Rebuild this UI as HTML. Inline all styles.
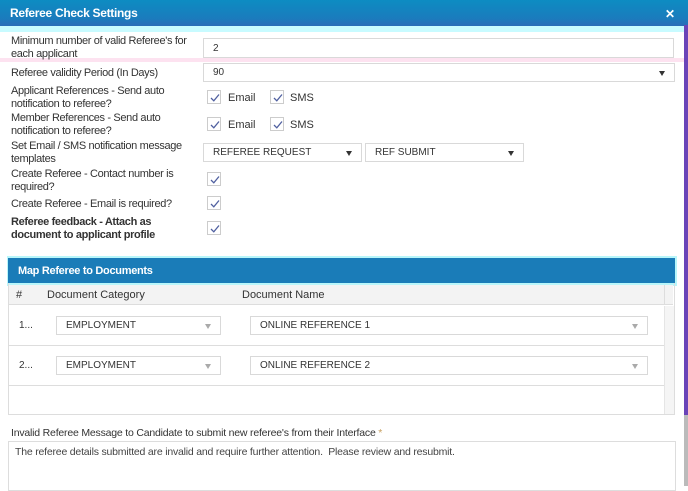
<!DOCTYPE html>
<html><head><style>
*{box-sizing:border-box;margin:0;padding:0}
body{width:688px;height:486px;overflow:hidden;background:#fff;font-family:"Liberation Sans",sans-serif;color:#333;position:relative}
.a{position:absolute}
.lbl{font-size:11px;line-height:13px;color:#333;left:11px;letter-spacing:-0.35px}
.inp{position:absolute;border:1px solid #d9d9d9;background:#fff;font-size:10px;padding-left:9px;display:flex;align-items:center;color:#333}
.cb{position:absolute;width:14px;height:14px;border:1px solid #ccc;background:#fff}
.cb svg{position:absolute;left:1px;top:1px}
.ck{font-size:11px;color:#333}
.arr{position:absolute;right:9px;top:50%;margin-top:-2px;width:0;height:0;border-left:3.5px solid transparent;border-right:3.5px solid transparent;border-top:5px solid #333}
.arr.l{border-top-color:#aaa}
</style></head><body>
<div class="a" style="left:0;top:0;width:688px;height:26px;background:linear-gradient(#0d8cc2,#1a7cbd 70%,#2a6cb8)"></div>
<div class="a" style="left:10px;top:6px;color:#fff;font-size:12px;font-weight:bold;letter-spacing:-0.3px">Referee Check Settings</div>
<div class="a" style="left:665px;top:7px;color:#fff;font-size:12px;font-weight:bold">✕</div>
<div class="a" style="left:0;top:26px;width:684px;height:6px;background:#c8fbff"></div>
<div class="a" style="left:684px;top:25px;width:4px;height:390px;background:#6a44b8"></div>
<div class="a" style="left:684px;top:415px;width:4px;height:71px;background:#bbb"></div>
<div class="a" style="left:0;top:58px;width:684px;height:4px;background:#fde2f0"></div>

<div class="a lbl" style="top:35px">Minimum number of valid Referee's for<br>each applicant</div>
<div class="inp" style="left:203px;top:38px;width:471px;height:20px">2</div>
<div class="a lbl" style="top:67px">Referee validity Period (In Days)</div>
<div class="inp" style="left:203px;top:63px;width:472px;height:19px">90<span class="arr"></span></div>

<div class="a lbl" style="top:85px">Applicant References - Send auto<br>notification to referee?</div>
<div class="cb" style="left:207px;top:90px"><svg width="12" height="12"><path d="M2 6L4.8 8.8L10 2.5" stroke="#5060a0" stroke-width="1.3" fill="none"/></svg></div>
<div class="a ck" style="left:228px;top:92px">Email</div>
<div class="cb" style="left:270px;top:90px"><svg width="12" height="12"><path d="M2 6L4.8 8.8L10 2.5" stroke="#5060a0" stroke-width="1.3" fill="none"/></svg></div>
<div class="a ck" style="left:290px;top:92px">SMS</div>

<div class="a lbl" style="top:112px">Member References - Send auto<br>notification to referee?</div>
<div class="cb" style="left:207px;top:117px"><svg width="12" height="12"><path d="M2 6L4.8 8.8L10 2.5" stroke="#5060a0" stroke-width="1.3" fill="none"/></svg></div>
<div class="a ck" style="left:228px;top:119px">Email</div>
<div class="cb" style="left:270px;top:117px"><svg width="12" height="12"><path d="M2 6L4.8 8.8L10 2.5" stroke="#5060a0" stroke-width="1.3" fill="none"/></svg></div>
<div class="a ck" style="left:290px;top:119px">SMS</div>

<div class="a lbl" style="top:140px">Set Email / SMS notification message<br>templates</div>
<div class="inp" style="left:203px;top:143px;width:159px;height:19px">REFEREE REQUEST<span class="arr"></span></div>
<div class="inp" style="left:365px;top:143px;width:159px;height:19px">REF SUBMIT<span class="arr"></span></div>

<div class="a lbl" style="top:168px">Create Referee - Contact number is<br>required?</div>
<div class="cb" style="left:207px;top:172px"><svg width="12" height="12"><path d="M2 6L4.8 8.8L10 2.5" stroke="#5060a0" stroke-width="1.3" fill="none"/></svg></div>
<div class="a lbl" style="top:198px">Create Referee - Email is required?</div>
<div class="cb" style="left:207px;top:196px"><svg width="12" height="12"><path d="M2 6L4.8 8.8L10 2.5" stroke="#5060a0" stroke-width="1.3" fill="none"/></svg></div>
<div class="a lbl" style="top:216px;font-weight:bold">Referee feedback - Attach as<br>document to applicant profile</div>
<div class="cb" style="left:207px;top:221px"><svg width="12" height="12"><path d="M2 6L4.8 8.8L10 2.5" stroke="#5060a0" stroke-width="1.3" fill="none"/></svg></div>

<div class="a" style="left:7px;top:256px;width:670px;height:30px;background:#b8f6fa"></div>
<div class="a" style="left:8px;top:258px;width:667px;height:25px;background:#1a7cb8"></div>
<div class="a" style="left:18px;top:265px;color:#fff;font-size:11px;font-weight:bold;letter-spacing:-0.3px">Map Referee to Documents</div>
<div class="a" style="left:8px;top:283px;width:667px;height:132px;border:1px solid #ddd;border-top:none"></div>
<div class="a" style="left:9px;top:285px;width:664px;height:20px;background:#f3f3f3;border-bottom:1px solid #ddd"></div>
<div class="a" style="left:664px;top:285px;width:1px;height:20px;background:#ddd"></div>
<div class="a" style="left:16px;top:289px;font-size:11px">#</div>
<div class="a" style="left:47px;top:289px;font-size:11px">Document Category</div>
<div class="a" style="left:242px;top:289px;font-size:11px">Document Name</div>
<div class="a" style="left:664px;top:306px;width:10px;height:108px;background:#f5f5f5;border-left:1px solid #e5e5e5"></div>
<div class="a" style="left:9px;top:345px;width:655px;height:1px;background:#ddd"></div>
<div class="a" style="left:9px;top:385px;width:655px;height:1px;background:#ddd"></div>
<div class="a" style="left:19px;top:320px;font-size:10px">1...</div>
<div class="inp" style="left:56px;top:316px;width:165px;height:19px">EMPLOYMENT<span class="arr l"></span></div>
<div class="inp" style="left:250px;top:316px;width:398px;height:19px">ONLINE REFERENCE 1<span class="arr l"></span></div>
<div class="a" style="left:19px;top:360px;font-size:10px">2...</div>
<div class="inp" style="left:56px;top:356px;width:165px;height:19px">EMPLOYMENT<span class="arr l"></span></div>
<div class="inp" style="left:250px;top:356px;width:398px;height:19px">ONLINE REFERENCE 2<span class="arr l"></span></div>

<div class="a" style="left:11px;top:427px;font-size:10.5px;letter-spacing:-0.2px">Invalid Referee Message to Candidate to submit new referee's from their Interface <span style="color:#c8a060">*</span></div>
<div class="a" style="left:8px;top:441px;width:668px;height:50px;border:1px solid #ddd"></div>
<div class="a" style="left:15px;top:446px;font-size:10.5px;letter-spacing:-0.2px;color:#444">The referee details submitted are invalid and require further attention.&nbsp; Please review and resubmit.</div>
</body></html>
